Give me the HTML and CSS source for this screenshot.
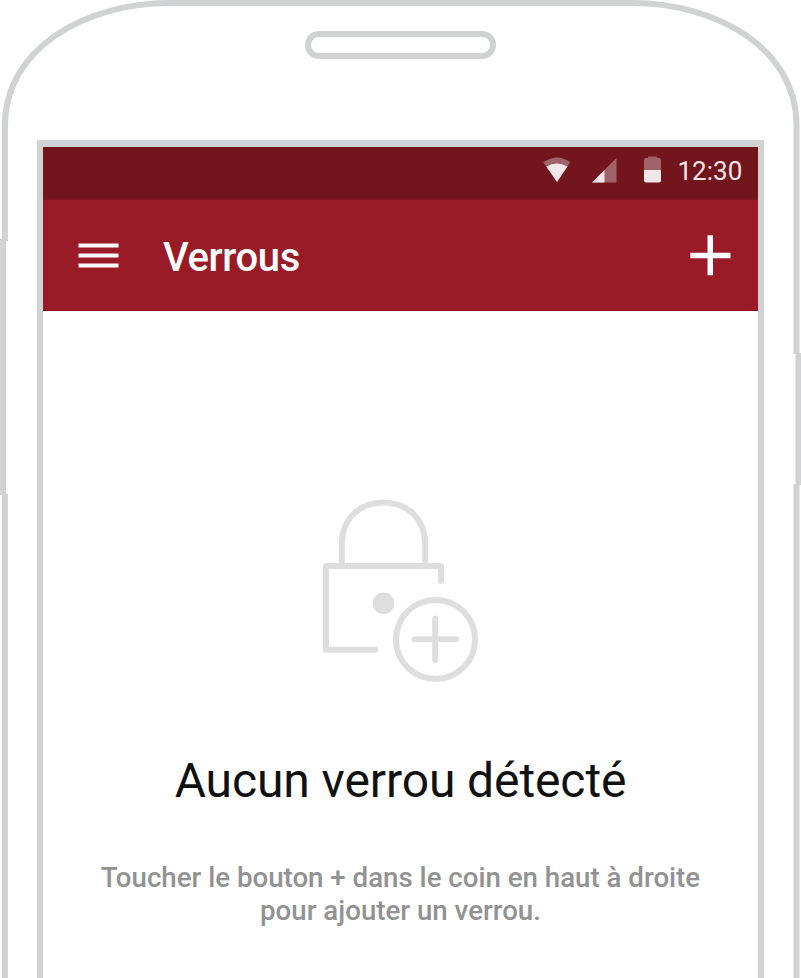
FILE: index.html
```html
<!DOCTYPE html>
<html lang="fr">
<head>
<meta charset="utf-8">
<title>Verrous</title>
<link rel="stylesheet" href="styles.css">
</head>
<body>
<div class="phone">
  <svg class="shell" width="801" height="978" viewBox="0 0 801 978" fill="none" stroke="#d0d2d3" stroke-width="6" aria-hidden="true">
    <path d="M3 239V495M5 978V494M5 241V125C5 50 83 3 170 3H632C719 3 796.500 50 796.500 125V354M796.500 484V978M798.500 353V485"/>
  </svg>
  <div class="speaker"></div>
  <main class="screen">
    <div class="status">
      <svg class="wifi" width="28" height="26" viewBox="0 0 28 26"><path fill="#a1636a" d="M.3 5.300Q14-4.500 27.300 5.300L14 25z"/><path fill="#f1e6e8" d="M3.300 9.600Q14 3.400 24.400 9.600L14 25z"/></svg>
      <svg class="signal" width="25" height="25" viewBox="0 0 25 25"><path fill="#a1636a" d="M24.500 0V24.500H0z"/><path fill="#f1e6e8" d="M12.500 12V24.500H0z"/></svg>
      <svg class="battery" width="17" height="27" viewBox="0 0 17 27"><path fill="#a1636a" d="M4 2V.5h9V2h2q2 0 2 2v10.500H0V4q0-2 2-2z"/><path fill="#f1e6e8" d="M0 14h17v10.500q0 2-2 2H2q-2 0-2-2z"/></svg>
      <span class="time">12:30</span>
    </div>
    <header class="appbar">
      <svg class="menu" width="41" height="26" viewBox="0 0 41 26" fill="#fff"><path d="M.5.500h40v4H.5zM.5 10.500h40v4H.5zM.5 20.500h40v4H.5z"/></svg>
      <h1 class="title">Verrous</h1>
      <svg class="add" width="41" height="41" viewBox="0 0 41 41" fill="#fff"><path d="M17.500.300h5.500v17.400h17.500v5.500H23v17H17.500v-17H.300v-5.500H17.500z"/></svg>
    </header>
    <section class="empty">
      <svg class="lock" width="162" height="190" viewBox="320 495 162 190" fill="none" stroke="#dedede" stroke-width="6" stroke-linecap="round" stroke-linejoin="round">
        <path d="M341.800 565V545C341.800 519 359 502.500 383.500 502.500S425.200 519 425.200 545V565" stroke-linecap="butt"/>
        <path d="M441 581V566H326V649.700H375.500"/>
        <circle cx="383.500" cy="603.300" r="10.800" fill="#dedede" stroke="none"/>
        <circle cx="435.500" cy="639.400" r="39.500"/>
        <path d="M435.200 618.500V660M414.500 639.300H456"/>
      </svg>
      <h2 class="heading">Aucun verrou détecté</h2>
      <p class="hint">Toucher le bouton + dans le coin en haut à droite<br>pour ajouter un verrou.</p>
    </section>
  </main>
</div>
</body>
</html>
```
FILE: styles.css
```css
* { box-sizing: border-box; }
body { margin: 0; background: #fff; font-family: Roboto, sans-serif; }
h1, h2, p { margin: 0; }
svg { display: block; flex: none; }
.phone { position: relative; width: 801px; height: 978px; overflow: hidden; display: flex; flex-direction: column; align-items: flex-start; }
.shell { position: absolute; top: 0; left: 0; }
.speaker { width: 191px; height: 28px; margin: 31px 0 81px 305px; border: 6px solid #d0d2d3; border-radius: 14px; }
.screen { width: 727px; height: 838px; margin-left: 37px; border: 6px solid #d0d2d3; border-width: 7px 6px 0; }
.status { height: 53px; padding: 0 16px 0 500px; display: flex; align-items: flex-start; background: #72151c; border-bottom: 1px solid #7c151f; color: #f1e6e8; }
.wifi { margin-top: 10px; }
.signal { margin: 11px 0 0 21px; }
.battery { margin: 8.500px 0 0 27px; }
.time { margin: 9px 0 0 16.500px; font-size: 26px; line-height: 31px; white-space: nowrap; }
.appbar { height: 111px; padding: 0 27px 0 35px; display: flex; align-items: center; background: #991b27; border-bottom: 1px solid #8f111b; }
.menu { margin-top: 1px; }
.title { flex: 1; margin-left: 44px; font-size: 40px; line-height: 48px; font-weight: 500; letter-spacing: -.4px; color: #fff; padding-top: 5px; }
.empty { display: flex; flex-direction: column; align-items: center; text-align: center; }
.lock { margin-top: 184px; }
.heading { margin-top: 68px; font-size: 48px; line-height: 56px; font-weight: 400; letter-spacing: -.1px; color: #111; white-space: nowrap; }
.hint { margin-top: 52px; font-size: 27.670px; line-height: 33px; font-weight: 500; color: #929292; white-space: nowrap; }
```
